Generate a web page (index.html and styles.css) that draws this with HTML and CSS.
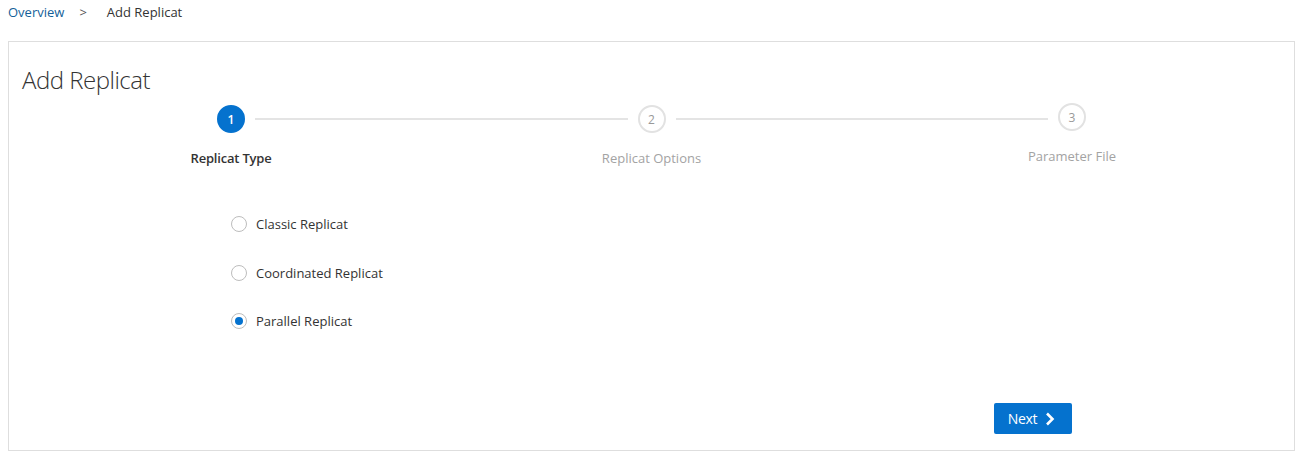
FILE: index.html
```html
<!DOCTYPE html>
<html>
<head>
<meta charset="utf-8">
<link rel="stylesheet" href="styles.css">
</head>
<body>
<nav class="crumbs">
  <a class="crumb-link">Overview</a>
  <span class="crumb-sep">&gt;</span>
  <span class="crumb-current">Add Replicat</span>
</nav>
<section class="panel">
  <h1 class="title">Add Replicat</h1>
  <div class="train">
    <div class="dot active">1</div>
    <div class="line"></div>
    <div class="dot">2</div>
    <div class="line"></div>
    <div class="dot dot-last">3</div>
    <div class="label active-label">Replicat Type</div>
    <div></div>
    <div class="label">Replicat Options</div>
    <div></div>
    <div class="label label-last">Parameter File</div>
  </div>
  <div class="options">
    <label class="option"><span class="radio"></span><span>Classic Replicat</span></label>
    <label class="option"><span class="radio"></span><span>Coordinated Replicat</span></label>
    <label class="option"><span class="radio checked"></span><span>Parallel Replicat</span></label>
  </div>
  <div class="actions">
    <button class="next">Next
      <svg class="chev" width="10" height="14" viewBox="0 0 10 14"><path d="M2 1.5 L7.5 7 L2 12.5" fill="none" stroke="#fff" stroke-width="2.6"/></svg>
    </button>
  </div>
</section>
</body>
</html>
```
FILE: styles.css
```css
html, body { margin: 0; padding: 0; background: #fff; }
body {
  font-family: "Open Sans", "Noto Sans", sans-serif;
  font-size: 13px;
  color: #333;
}
.crumbs {
  height: 25px;
  padding: 3px 0 0 8px;
  box-sizing: border-box;
  display: flex;
  font-size: 13px;
  line-height: 18px;
}
.crumb-link { color: #145f99; }
.crumb-sep { color: #555; margin: 0 20px 0 15px; }
.crumb-current { color: #333; }
.panel {
  margin: 16px 5px 0 8px;
  height: 410px;
  box-sizing: border-box;
  border: 1px solid #dedede;
  position: relative;
}
.title {
  margin: 0;
  padding: 22px 0 0 13px;
  font-size: 24px;
  font-weight: 300;
  line-height: 32px;
  color: #333;
  letter-spacing: -0.5px;
}
.train {
  display: grid;
  grid-template-columns: 28px 1fr 28px 1fr 28px;
  column-gap: 10px;
  margin: 9px 0 0 208px;
  width: 869px;
  row-gap: 16px;
}
.dot {
  width: 28px;
  height: 28px;
  border-radius: 50%;
  box-sizing: border-box;
  border: 2px solid #e2e2e2;
  color: #999;
  font-size: 12px;
  display: flex;
  align-items: center;
  justify-content: center;
}
.dot-last, .label-last { margin-top: -2px; }
.dot.active {
  background: #0572ce;
  border-color: #0572ce;
  color: #fff;
  font-weight: 600;
}
.line {
  height: 2px;
  background: #e4e4e4;
  align-self: center;
}
.label {
  display: flex;
  justify-content: center;
  white-space: nowrap;
  color: #a3a3a3;
  font-size: 13px;
  line-height: 18px;
}
.active-label { color: #333; font-weight: 600; letter-spacing: -0.2px; }
.options {
  margin: 48px 0 0 222px;
  display: flex;
  flex-direction: column;
  gap: 30.5px;
}
.option {
  display: flex;
  align-items: center;
  gap: 9px;
  height: 18px;
  line-height: 18px;
  color: #333;
}
.radio {
  width: 16px;
  height: 16px;
  box-sizing: border-box;
  border: 1px solid #bdbdbd;
  border-radius: 50%;
  background: #fff;
  display: flex;
  align-items: center;
  justify-content: center;
}
.radio.checked::after {
  content: "";
  width: 8px;
  height: 8px;
  border-radius: 50%;
  background: #0572ce;
}
.actions {
  position: absolute;
  left: 985px;
  top: 361px;
}
.next {
  width: 78px;
  height: 31px;
  border: none;
  border-radius: 2px;
  background: #0572ce;
  color: #fff;
  font-family: "Open Sans", "Noto Sans", sans-serif;
  font-size: 14px;
  letter-spacing: -0.3px;
  display: flex;
  align-items: center;
  justify-content: center;
  gap: 8px;
  padding: 0 3px 0 0;
}
```
